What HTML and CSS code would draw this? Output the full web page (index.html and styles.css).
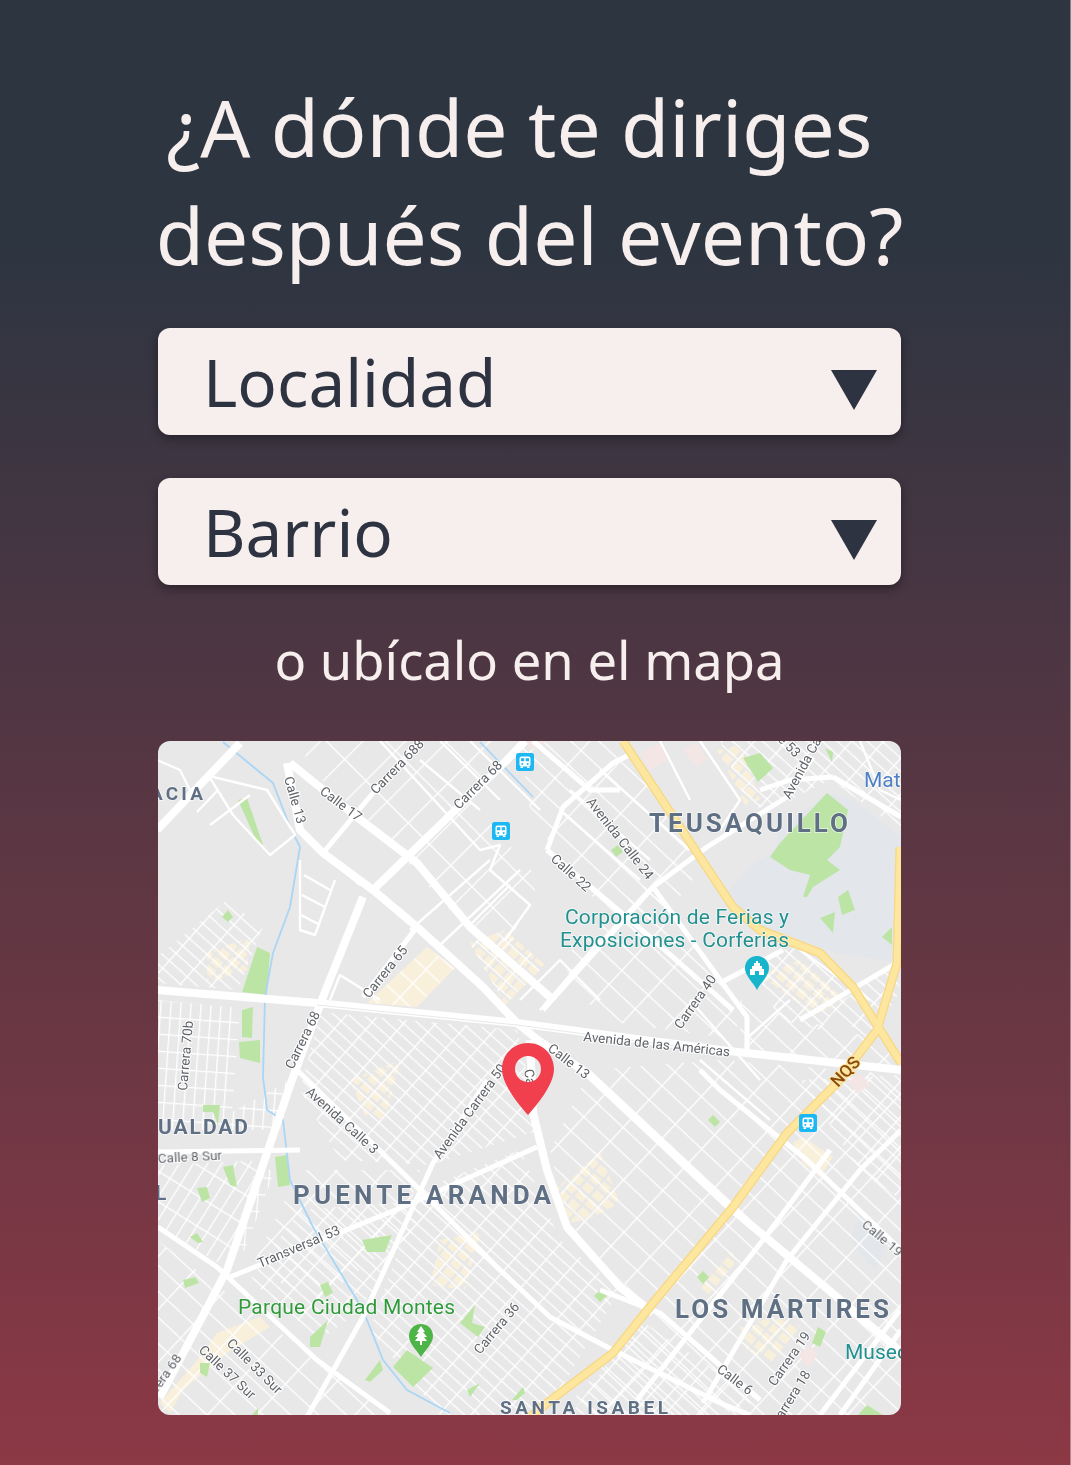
FILE: index.html
```html
<!DOCTYPE html>
<html lang="es">

<head>
    <meta charset="UTF-8">
    <meta name="viewport" content="width=device-width, initial-scale=1.0">
    <title>Destino</title>
    <link rel="stylesheet" href="styles.css">
</head>

<body>
    <div class="container">
        <h1 class="title">¿A dónde te diriges&nbsp;<br>después del evento?</h1>

        <div class="select">
            <span>Localidad</span>
            <i class="arrow"></i>
        </div>
        <div class="select">
            <span>Barrio</span>
            <i class="arrow"></i>
        </div>

        <p class="hint">o ubícalo en el mapa</p>

        <div class="map">
            <svg viewBox="158 741 743 674" width="743" height="674">
                <defs>
                    <filter id="soft"><feGaussianBlur stdDeviation="0.4"/></filter>
                    <pattern id="grid-fine" width="24" height="10" patternUnits="userSpaceOnUse" patternTransform="rotate(42)"><path d="M0 0H24M0 0V10"/></pattern>
                    <pattern id="grid-ne" width="36" height="19" patternUnits="userSpaceOnUse" patternTransform="rotate(43)"><path d="M0 0H36M0 0V19"/></pattern>
                    <pattern id="grid-sw" width="26" height="12" patternUnits="userSpaceOnUse" patternTransform="rotate(-58)"><path d="M0 0H26M0 0V12"/></pattern>
                    <pattern id="grid-flat" width="10" height="17" patternUnits="userSpaceOnUse" patternTransform="rotate(4)"><path d="M0 0H10M0 0V17"/></pattern>
                    <pattern id="grid-top" width="42" height="30" patternUnits="userSpaceOnUse" patternTransform="rotate(-45)"><path d="M0 0H42M0 0V30"/></pattern>
                    <pattern id="tan-dots" width="13" height="11" patternUnits="userSpaceOnUse" patternTransform="rotate(40)"><rect width="10" height="8" fill="#f9f0dc"/></pattern>
                    <symbol id="bus" viewBox="0 0 18 18">
                        <rect width="18" height="18" rx="2.5" fill="#1cb8f3"/>
                        <rect x="3.5" y="3.5" width="11" height="10" rx="2" fill="#fff"/>
                        <rect x="5" y="5.2" width="3.3" height="3" fill="#1cb8f3"/>
                        <rect x="9.7" y="5.2" width="3.3" height="3" fill="#1cb8f3"/>
                        <circle cx="6.3" cy="11" r="1" fill="#1cb8f3"/>
                        <circle cx="11.7" cy="11" r="1" fill="#1cb8f3"/>
                        <rect x="4.5" y="13.5" width="2.5" height="1.5" fill="#fff"/>
                        <rect x="11" y="13.5" width="2.5" height="1.5" fill="#fff"/>
                    </symbol>
                </defs>

                <g filter="url(#soft)">
                    <rect class="land" x="158" y="741" width="743" height="674"/>
                    <path class="campus" d="M727 893 753 863 773 853 780 830 827 793 853 800 901 837 901 963 837 953 780 933 747 927Z"/>
                    <path class="campus" d="M860 1215 880 1230 884 1250 875 1270 850 1240Z"/>

                    <g class="tan">
                        <path d="M367 1003 427 947 455 968 417 1007Z"/>
                        <path d="M793 1143 803 1137 833 1157 820 1177 803 1163Z"/>
                        <path d="M160 1403 200 1357 217 1333 260 1317 270 1327 227 1353 183 1390 170 1413Z"/>
                    </g>
                    <path fill="url(#tan-dots)" d="M207 953 250 937 247 970 207 983Z"/>
                    <path fill="url(#tan-dots)" d="M470 943 505 930 545 965 505 1005Z"/>
                    <path fill="url(#tan-dots)" d="M557 1187 600 1153 620 1203 593 1217 570 1223Z"/>
                    <path fill="url(#tan-dots)" d="M697 1287 730 1250 737 1260 710 1297Z"/>
                    <path fill="url(#tan-dots)" d="M740 1327 773 1317 803 1327 773 1363 747 1350Z"/>
                    <path fill="url(#tan-dots)" d="M760 975 800 960 845 1000 815 1015Z"/>
                    <path fill="url(#tan-dots)" d="M717 750 740 745 760 800 745 805Z"/>
                    <path fill="url(#tan-dots)" d="M350 1080 400 1060 385 1120 365 1115Z"/>
                    <path fill="url(#tan-dots)" d="M440 1240 480 1232 465 1290 430 1285Z"/>

                    <path fill="url(#grid-top)" d="M300 741H500L470 800 540 880 500 960 440 900 380 830 310 770Z"/>
                    <path fill="url(#grid-ne)" d="M367 1003 427 947 455 968 417 1007Z"/>
                    <path fill="url(#grid-ne)" d="M520 741H620L700 870 640 950 560 860 530 810Z"/>
                    <path fill="url(#grid-ne)" d="M560 960 650 880 730 990 740 1040 600 1020Z"/>
                    <path fill="url(#grid-ne)" d="M740 1000 800 1020 880 1040 901 1070 740 1052Z"/>
                    <path fill="url(#grid-fine)" d="M720 741H901V830L830 780 790 800 750 810Z"/>
                    <path fill="url(#grid-fine)" d="M157 957 227 900 263 927 238 990 157 983Z"/>
                    <path fill="url(#grid-fine)" d="M470 943 505 930 545 965 505 1005Z"/>
                    <path fill="url(#grid-fine)" d="M750 960 800 945 850 990 820 1030 780 1020Z"/>
                    <path fill="url(#grid-fine)" d="M830 1010 890 965 901 990 870 1040Z"/>
                    <path fill="url(#grid-flat)" d="M157 1000 240 1008 232 1112 290 1080 280 1130 157 1130Z"/>
                    <path fill="url(#grid-fine)" d="M320 1012 517 1030 540 1130 430 1165 340 1160 300 1090Z"/>
                    <path fill="url(#grid-ne)" d="M590 1070 720 1060 901 1075V1415H560L650 1310 570 1230 550 1150Z"/>
                    <path fill="url(#grid-fine)" d="M800 1080 901 1075V1200L860 1170Z"/>
                    <path fill="url(#grid-fine)" d="M640 1320 760 1400 720 1415H570Z"/>
                    <path fill="url(#grid-sw)" d="M157 1165 270 1160 230 1270 157 1225Z"/>
                    <path fill="url(#grid-ne)" d="M300 1170 420 1170 400 1240 320 1300 250 1270Z"/>
                    <path fill="url(#grid-fine)" d="M300 1210 430 1200 360 1310 320 1340 250 1280Z"/>
                    <path fill="url(#grid-fine)" d="M420 1190 520 1150 560 1240 620 1290 560 1390 530 1415H440L370 1330Z"/>
                    <path fill="url(#grid-ne)" d="M157 1240 210 1280 330 1370 390 1415H157Z"/>
                    <path fill="url(#grid-flat)" d="M255 1170 275 1170 245 1250 230 1260Z"/>

                    <g class="pink">
                        <path d="M640 753 660 743 667 760 650 770Z"/>
                        <path d="M683 750 697 743 707 760 697 767Z"/>
                        <path d="M523 741H547L533 750Z"/>
                        <path d="M848 1082 860 1073 870 1085 858 1093Z"/>
                        <path d="M798 1355 810 1345 818 1355 808 1367Z"/>
                    </g>

                    <g class="park">
                        <path d="M770 857 780 843 827 793 848 810 840 847 827 860 840 870 813 887 807 897 803 897 810 875 790 870Z"/>
                        <path d="M838 897 848 890 855 910 842 915Z"/>
                        <path d="M820 918 835 912 833 933Z"/>
                        <path d="M882 937 892 927 892 945Z"/>
                        <path d="M743 758 760 753 773 768 758 782Z"/>
                        <path d="M825 748 833 752 832 762Z"/>
                        <path d="M238 800 247 798 263 845 257 842Z"/>
                        <path d="M242 992 257 947 270 953 267 995Z"/>
                        <path d="M242 1010 253 1007 252 1038 242 1037Z"/>
                        <path d="M239 1042 260 1040 260 1063 240 1058Z"/>
                        <path d="M222 917 228 910 233 917 228 922Z"/>
                        <path d="M203 1105H220L218 1125 213 1112H203Z"/>
                        <path d="M275 1157 287 1155 290 1185 278 1187Z"/>
                        <path d="M223 1167 233 1165 237 1187 230 1185Z"/>
                        <path d="M197 1188 207 1187 210 1198 202 1202Z"/>
                        <path d="M190 1237 197 1233 203 1242 198 1243Z"/>
                        <path d="M183 1280 195 1277 199 1283 185 1288Z"/>
                        <path d="M362 1240 392 1235 385 1252 367 1252Z"/>
                        <path d="M320 1285 328 1282 333 1293 325 1297Z"/>
                        <path d="M310 1337 328 1320 320 1347 310 1347Z"/>
                        <path d="M393 1367 407 1350 433 1368 413 1387Z"/>
                        <path d="M365 1380 380 1360 383 1370 370 1382Z"/>
                        <path d="M460 1323 475 1305 472 1323 485 1327 478 1337Z"/>
                        <path d="M467 1390 480 1383 470 1397Z"/>
                        <path d="M512 1400 523 1387 525 1393 517 1400Z"/>
                        <path d="M200 1363H210L207 1377 200 1373Z"/>
                        <path d="M252 1415 258 1408V1415Z"/>
                        <path d="M708 1120 713 1115 720 1122 715 1127Z"/>
                        <path d="M697 1277 703 1271 709 1277 703 1284Z"/>
                        <path d="M594 1296 600 1290 607 1296 600 1302Z"/>
                        <path d="M812 1343 818 1327 826 1332 820 1347Z"/>
                        <path d="M858 1415 867 1405 883 1415Z"/>
                        <path d="M611 850 618 845 623 852 616 857Z"/>
                    </g>

                    <g class="water">
                        <path d="M223 742 273 783 290 827 300 847 290 907 273 953 265 997 263 1077 267 1110 283 1120 290 1180 313 1227 337 1267 363 1310 383 1360 407 1390 450 1413"/>
                        <path d="M480 742 533 797"/>
                    </g>

                    <g class="road-sm">
                        <path d="M157 760 180 770 190 790M207 773 233 815 270 855 295 835 267 790 205 775M197 812 218 790M210 825 250 795"/>
                        <path d="M300 860 300 930 315 935 335 880M304 875 330 890M302 895 325 907M301 915 320 925"/>
                        <path d="M330 1000 340 975 380 1000M320 850 360 885M420 760 480 810M440 741 500 800"/>
                        <path d="M470 741 540 810M380 741 480 850 500 845 490 870 530 905 505 940"/>
                        <path d="M410 930 490 860M440 945 520 870M470 925 510 885"/>
                        <path d="M520 1000 560 960 600 1000M540 1010 600 940"/>
                        <path d="M690 1000 760 1080M745 1040 790 1000M700 1060 770 1120"/>
                        <path d="M560 810 640 880M570 790 650 860M600 770 690 850"/>
                        <path d="M660 741 690 800M700 741 740 800 720 830"/>
                        <path d="M800 950 870 1000M860 741 880 790 901 800"/>
                    </g>

                    <g class="road-md">
                        <path d="M158 1227 217 1267 317 1360 390 1413"/>
                        <path d="M230 1277 403 1207 537 1147"/>
                        <path d="M307 1417 363 1317 433 1163 487 1080"/>
                        <path d="M158 1152 300 1150"/>
                        <path d="M297 1070 410 1180 497 1267 550 1317 607 1347 720 1403 750 1415"/>
                        <path d="M700 1070 720 1090 807 1160 901 1250"/>
                        <path d="M703 1403 787 1260 860 1170 901 1130"/>
                        <path d="M637 1400 763 1240 830 1150"/>
                        <path d="M543 1010 653 887 707 847 787 797 813 757"/>
                        <path d="M653 887 747 1017 747 1052"/>
                        <path d="M547 850 563 807 613 763 633 753"/>
                        <path d="M547 850 650 937 733 1010"/>
                        <path d="M720 983 783 950"/>
                        <path d="M800 1020 897 963"/>
                        <path d="M833 777 901 817"/>
                        <path d="M760 790 790 780 833 777"/>
                        <path d="M417 927 363 997"/>
                        <path d="M323 853 373 793 420 741"/>
                        <path d="M533 741 590 790 620 790"/>
                        <path d="M600 1290 660 1313 760 1400"/>
                        <path d="M840 1415 901 1330"/>
                        <path d="M820 1415 900 1310"/>
                    </g>

                    <g class="road-lg">
                        <path d="M157 830 240 743"/>
                        <path d="M287 763 300 830 323 853 373 890 417 927 483 987 517 1023 538 1040 587 1073 733 1210 837 1297 901 1352"/>
                        <path d="M290 763 357 817 417 863 470 927 550 997"/>
                        <path d="M373 890 507 760 525 741"/>
                        <path d="M363 897 323 997 293 1077 227 1270 160 1397"/>
                        <path d="M157 990 317 1003 517 1023 720 1050 901 1070"/>
                        <path d="M530 1040 533 1113 547 1170 567 1227 620 1287 653 1313"/>
                    </g>
                    <path class="road-gap" d="M317 1005 517 1025 720 1052"/>

                    <g class="highway">
                        <path d="M623 741 733 907 760 930 820 953 853 987 901 1063"/>
                        <path d="M900 847 897 963 877 1030 837 1083 787 1133 733 1207 653 1303 613 1353 547 1403 530 1417"/>
                    </g>
                    <g class="highway-top">
                        <path d="M623 741 733 907 760 930 820 953 853 987 901 1063"/>
                        <path d="M900 847 897 963 877 1030 837 1083 787 1133 733 1207 653 1303 613 1353 547 1403 530 1417"/>
                    </g>

                    <g class="street">
                        <text transform="translate(284 778) rotate(74)">Calle 13</text>
                        <text transform="translate(319 793) rotate(37)">Calle 17</text>
                        <text transform="translate(376 795) rotate(-46)">Carrera 688</text>
                        <text transform="translate(459 810) rotate(-45)">Carrera 68</text>
                        <text transform="translate(369 999) rotate(-51)">Carrera 65</text>
                        <text transform="translate(293 1070) rotate(-64)">Carrera 68</text>
                        <text transform="translate(187 1091) rotate(-85)">Carrera 70b</text>
                        <text transform="translate(586 802) rotate(52)">Avenida Calle 24</text>
                        <text transform="translate(550 860) rotate(42)">Calle 22</text>
                        <text transform="translate(790 800) rotate(-62)">Avenida Calle</text>
                        <text transform="translate(761 724) rotate(45)">Calle 53</text>
                        <text transform="translate(681 1030) rotate(-55)">Carrera 40</text>
                        <text transform="translate(583 1041) rotate(6)">Avenida de las Américas</text>
                        <text transform="translate(547 1050) rotate(38)">Calle 13</text>
                        <text transform="translate(440 1160) rotate(-54)">Avenida Carrera 50</text>
                        <text transform="translate(305 1093) rotate(42)">Avenida Calle 3</text>
                        <text transform="translate(158 1163) rotate(-3)">Calle 8 Sur</text>
                        <text transform="translate(260 1268) rotate(-23)">Transversal 53</text>
                        <text transform="translate(226 1344) rotate(45)">Calle 33 Sur</text>
                        <text transform="translate(198 1351) rotate(43)">Calle 37 Sur</text>
                        <text transform="translate(182 1358) rotate(-55)" text-anchor="end">Carrera 68</text>
                        <text transform="translate(480 1355) rotate(-50)">Carrera 36</text>
                        <text transform="translate(861 1226) rotate(40)">Calle 19</text>
                        <text transform="translate(716 1371) rotate(37)">Calle 6</text>
                        <text transform="translate(775 1387) rotate(-55)">Carrera 19</text>
                        <text transform="translate(811 1374) rotate(-58)" text-anchor="end">Carrera 18</text>
                    </g>
                    <text class="route" transform="translate(838 1088) rotate(-47)">NQS</text>

                    <g class="area">
                        <text class="area-lg" x="649" y="832" textLength="199">TEUSAQUILLO</text>
                        <text class="area-lg" x="293" y="1204" textLength="258">PUENTE ARANDA</text>
                        <text class="area-lg" x="675" y="1318" textLength="214">LOS MÁRTIRES</text>
                        <text class="area-md" x="158" y="1134" textLength="90">UALDAD</text>
                        <text class="area-md" x="155" y="1200">L</text>
                        <text class="area-sm" x="500" y="1414" textLength="168">SANTA ISABEL</text>
                        <text class="area-sm" x="150" y="800" textLength="53">ACIA</text>
                    </g>

                    <text class="poi poi-blue" x="864" y="787">Mat</text>
                    <text class="poi poi-teal" x="565" y="924" textLength="224">Corporación de Ferias y</text>
                    <text class="poi poi-teal" x="560" y="947" textLength="229">Exposiciones - Corferias</text>
                    <text class="poi poi-teal" x="845" y="1359">Museo</text>
                    <text class="poi poi-green" x="238" y="1314" textLength="217">Parque Ciudad Montes</text>

                    <use href="#bus" x="516" y="753" width="18" height="18"/>
                    <use href="#bus" x="492" y="822" width="18" height="18"/>
                    <use href="#bus" x="799" y="1114" width="18" height="18"/>

                    <path fill="#12b5cb" d="M757 956C750 956 745 961 745 968 745 976 753 982 757 990 761 982 769 976 769 968 769 961 764 956 757 956Z"/>
                    <path fill="#fff" d="M750 975V969H752V966H754V963H756V961H758V963H760V966H762V969H764V975H759V971H755V975Z"/>

                    <path fill="#4db546" d="M421 1324C414 1324 409 1329 409 1336 409 1344 417 1350 421 1357 425 1350 433 1344 433 1336 433 1329 428 1324 421 1324Z"/>
                    <path fill="#fff" d="M421 1326 425 1332H423L427 1337H424L427 1341H422V1345H420V1341H415L418 1337H415L419 1332H417Z"/>
                </g>

                <text class="street pin-label" transform="translate(524 1070) rotate(80)">Ca</text>
                <path class="pin" fill-rule="evenodd" d="M528 1043C513 1043 502 1055 502 1069 502 1085 520 1106 528 1115 536 1106 554 1085 554 1069 554 1055 543 1043 528 1043ZM528 1056A13 13 0 1 0 528 1082 13 13 0 1 0 528 1056Z"/>
            </svg>
        </div>
    </div>
</body>

</html>
```

FILE: styles.css
```css
body {
    font-family: "Noto Sans", "Open Sans", sans-serif;
    background: linear-gradient(#2d3541 0, #2d3541 17%, #8c3845 100%);
    box-shadow: inset -1px 0 0 rgba(255, 255, 255, 0.4);
    color: #f7efee;
    margin: 0;
    height: 1465px;
    overflow: hidden;
}

.container {
    width: 743px;
    margin-left: 158px;
    padding-top: 73px;
}

.title {
    font-size: 78.5px;
    font-weight: 400;
    line-height: 108px;
    text-align: center;
    margin: 0 -10px 39px;
}

.select {
    display: flex;
    justify-content: space-between;
    align-items: center;
    height: 107px;
    padding: 0 24px 0 45px;
    margin-bottom: 43px;
    background: #f7efee;
    color: #2d3340;
    font-size: 65.5px;
    border-radius: 12px;
    box-shadow: 0 4px 10px rgba(0, 0, 0, 0.35);
}

.arrow {
    width: 0;
    height: 0;
    margin-top: 16px;
    border-left: 23px solid transparent;
    border-right: 23px solid transparent;
    border-top: 40px solid #2d3340;
}

.hint {
    font-size: 52.5px;
    line-height: 72px;
    text-align: center;
    margin: -4px 0 45px;
}

.map {
    height: 674px;
    border-radius: 12px;
    overflow: hidden;
}

.map svg {
    display: block;
}

.land { fill: #e8e8e8; }
.campus { fill: #e3e6ea; }
.tan { fill: #f9f0dc; }
.pink { fill: #f5e6e6; }
.park { fill: #bce5a5; }

pattern path {
    fill: none;
    stroke: #fff;
    stroke-width: 2.6;
}

.water,
.road-sm,
.road-md,
.road-lg,
.road-gap,
.highway,
.highway-top {
    fill: none;
    stroke-linejoin: round;
}

.water { stroke: #a9d6f7; stroke-width: 1.8; }
.road-sm { stroke: #fff; stroke-width: 2.4; }
.road-md { stroke: #fff; stroke-width: 5; }
.road-lg { stroke: #fff; stroke-width: 8; }
.road-gap { stroke: #e8e8e8; stroke-width: 1; }
.highway { stroke: #f8d784; stroke-width: 9; }
.highway-top { stroke: #fde69d; stroke-width: 6.5; }

.street text,
.pin-label {
    font-family: Roboto, sans-serif;
    font-size: 13.5px;
    fill: #5f6368;
    stroke: #fff;
    stroke-width: 2px;
    paint-order: stroke;
}

.route {
    font-family: Roboto, sans-serif;
    font-size: 17px;
    font-weight: 500;
    fill: #8a4a10;
    stroke: #fde69d;
    stroke-width: 2px;
    paint-order: stroke;
}

.area text {
    font-family: Roboto, sans-serif;
    font-weight: 700;
    fill: #5f6f84;
    stroke: #fff;
    stroke-width: 1.5px;
    stroke-opacity: 0.7;
    paint-order: stroke;
}

.area-lg { font-size: 26px; }
.area-md { font-size: 21px; }
.area-sm { font-size: 19px; }

.poi {
    font-family: Roboto, sans-serif;
    font-size: 21px;
    stroke: #fff;
    stroke-width: 1.5px;
    stroke-opacity: 0.7;
    paint-order: stroke;
}

.poi-blue { fill: #4f80c4; }
.poi-teal { fill: #21908f; }
.poi-green { fill: #2f9a3a; }

.pin { fill: #f23f4e; }
```
